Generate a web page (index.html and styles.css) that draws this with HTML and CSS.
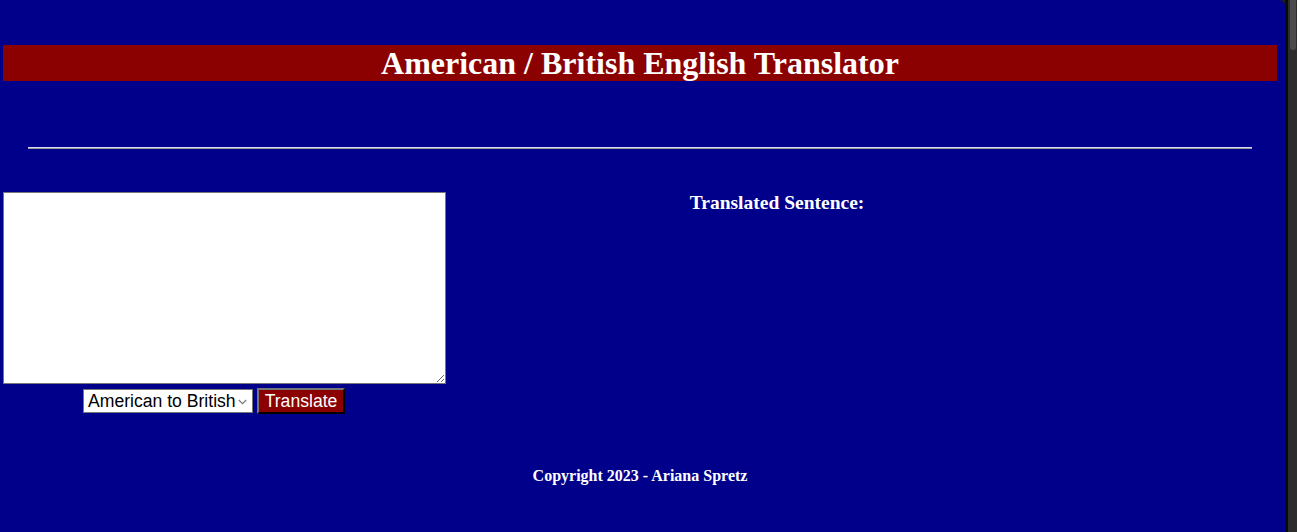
FILE: index.html
```html
<!DOCTYPE html>
<html lang="en">
<head>
<meta charset="utf-8">
<title>American / British English Translator</title>
<link rel="stylesheet" href="styles.css">
</head>
<body>
<div class="window">
  <div class="page">
    <h1 class="title">American / British English Translator</h1>
    <hr class="rule">
    <div class="main">
      <div class="left">
        <textarea class="input" aria-label="Text to translate"></textarea>
        <div class="controls">
          <span class="select-wrap">
            <select class="locale">
              <option>American to British</option>
              <option>British to American</option>
            </select>
            <svg class="chev" width="9" height="6" viewBox="0 0 9 6" aria-hidden="true"><path d="M0.8 1 L4.5 4.6 L8.2 1" fill="none" stroke="#7a7a7a" stroke-width="1.2"/></svg>
          </span>
          <button class="btn" type="button">Translate</button>
        </div>
      </div>
      <div class="right">
        <h3 class="out-title">Translated Sentence:</h3>
      </div>
    </div>
    <footer class="footer">Copyright 2023 - Ariana Spretz</footer>
  </div>
  <div class="scrollbar"><div class="thumb"></div></div>
</div>
</body>
</html>
```
FILE: styles.css
```css
html, body {
  margin: 0;
  padding: 0;
  height: 100%;
  overflow: hidden;
  background: #1f1f1f;
}
.window {
  display: flex;
  height: 532px;
}
.page {
  flex: 1;
  background: #00008b;
  border-top-right-radius: 6px;
  padding: 0 8px 0 3px;
  font-family: "Liberation Serif", "Times New Roman", serif;
  color: #fff;
  display: flex;
  flex-direction: column;
}
.title {
  margin: 45px 0 0;
  height: 36px;
  line-height: 37px;
  background: #8b0000;
  font-size: 32px;
  font-weight: bold;
  text-align: center;
}
.rule {
  margin: 66px 25px 0 25px;
  border: 0;
  border-top: 1px solid #d9d9ff;
  border-bottom: 1px solid #9a9a9a;
  height: 0;
}
.main {
  display: flex;
  margin-top: 43px;
}
.left {
  width: 443px;
  display: flex;
  flex-direction: column;
}
.input {
  display: block;
  box-sizing: border-box;
  width: 443px;
  height: 192px;
  margin: 0;
  border: 1px solid #767676;
  background: #fff;
  resize: both;
}
.controls {
  display: flex;
  align-items: flex-start;
  gap: 4px;
  padding-left: 80px;
  margin-top: 4px;
}
.select-wrap {
  position: relative;
  display: block;
  margin-top: 1px;
}
.locale {
  display: block;
  box-sizing: border-box;
  width: 170px;
  height: 24px;
  font-family: "Liberation Sans", Arial, sans-serif;
  font-size: 17.6px;
  color: #000;
  background: #fff;
  border: 1px solid #767676;
  border-radius: 0;
  padding: 0 0 0 4px;
  -webkit-appearance: none;
  appearance: none;
}
.chev {
  position: absolute;
  left: 155px;
  top: 10px;
  pointer-events: none;
}
.btn {
  box-sizing: border-box;
  width: 88px;
  height: 26px;
  padding: 0 5px;
  font-family: "Liberation Sans", Arial, sans-serif;
  font-size: 17.6px;
  line-height: 20px;
  color: #fff;
  background: #8b0000;
  border: 2px solid;
  border-color: #767676 #000 #000 #767676;
}
.right {
  width: 662px;
  text-align: center;
}
.out-title {
  margin: 0;
  padding-top: 0;
  font-size: 19.5px;
  font-weight: bold;
  line-height: 22px;
}
.footer {
  margin-top: 53px;
  text-align: center;
  font-weight: bold;
  font-size: 16px;
}
.scrollbar {
  width: 9px;
  border-left: 3px solid #0a0a0a;
  background: #2c2c2c;
}
.thumb {
  margin: 0 1px 0 2px;
  height: 50px;
  background: #4b4b4b;
  border-radius: 0 0 4px 4px;
}
```
